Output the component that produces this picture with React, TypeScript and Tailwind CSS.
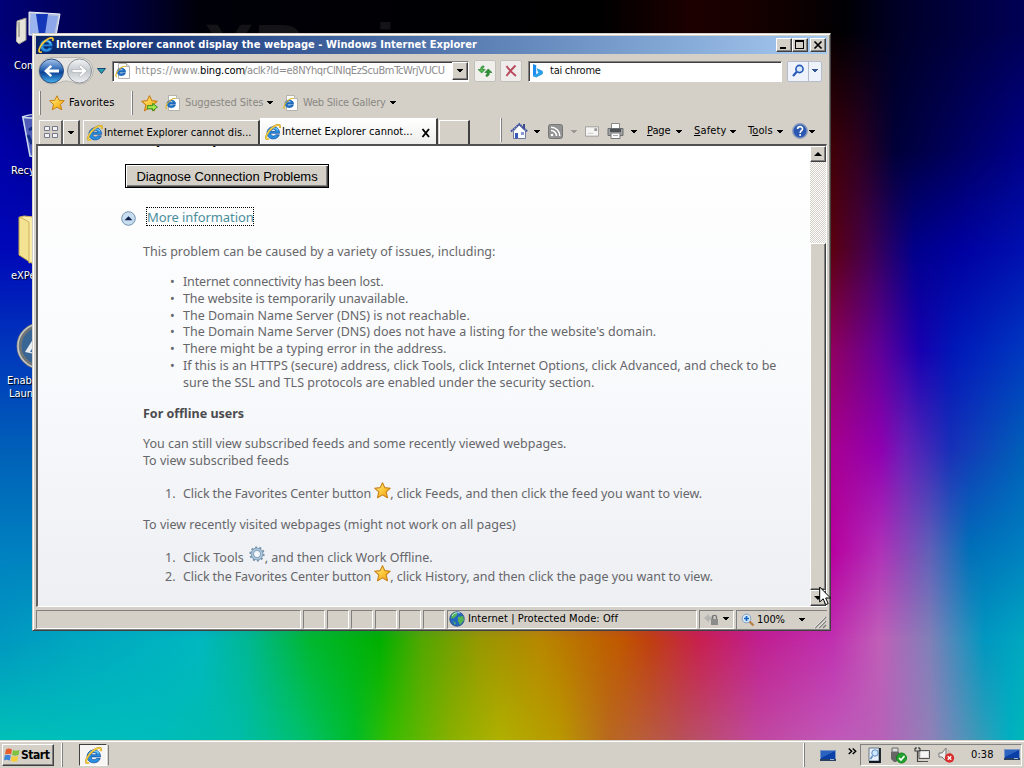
import type { ReactNode } from "react";

const UI = "font-['DejaVu_Sans_Condensed','DejaVu_Sans',sans-serif] [font-stretch:condensed]";

function Caret({ className = "text-black" }: { className?: string }) {
  return (
    <svg width="6" height="4" viewBox="0 0 6 4" className={`shrink-0 ${className}`} shapeRendering="crispEdges">
      <path d="M0 0h6L3 3.5z" fill="currentColor" />
    </svg>
  );
}

function IeLogo({ size = 16 }: { size?: number }) {
  return (
    <svg width={size} height={size} viewBox="0 0 16 16" className="shrink-0">
      <path
        d="M14.6 9.3H5.7c.1 1.7 1.2 2.7 2.7 2.7 1 0 1.8-.4 2.3-1.2h3.6c-.9 2.6-3.1 4.1-6 4.1C4.7 14.9 2 12.5 2 9c0-3.6 2.7-6.2 6.3-6.2 3.7 0 6.3 2.5 6.3 6.5zM5.8 7.3h5.1c-.2-1.3-1.2-2.1-2.5-2.1-1.4 0-2.3.8-2.6 2.1z"
        fill="#2a90e0"
        stroke="#0b4a9c"
        strokeWidth=".7"
      />
      <path d="M3.5 8c.7-2.600 2.500-4.200 4.900-4.300 2 0 3.600.9 4.500 2.400" fill="none" stroke="#7fd0f8" strokeWidth="1.1" />
      <path d="M3.800 15.100C.7 16 .4 13.500 2 10.300 4.200 5.800 9.600 1.100 13.300.8c1.800-.1 2 1.400 1.300 3" fill="none" stroke="#b98a10" strokeWidth="1.9" />
      <path d="M3.800 15.100C.7 16 .4 13.500 2 10.300 4.200 5.800 9.600 1.100 13.300.8c1.800-.1 2 1.400 1.300 3" fill="none" stroke="#f5d34a" strokeWidth="1.2" />
    </svg>
  );
}

function PageIcon() {
  return (
    <svg width="16" height="16" viewBox="0 0 16 16" className="shrink-0">
      <path d="M3.500.5h8l3 3v12h-11z" fill="#fff" stroke="#b5b3ab" />
      <path d="M11.500.5v3h3" fill="#e4e4e4" stroke="#b5b3ab" />
      <path d="M10.600 9.200H4.500c.1 1.700 2.700 2 3.500.8h2.400C9.600 13.900 2 13.600 2 8.800c0-5 8.900-5.100 8.600.4zM4.600 7.300h3.700C7.800 5.600 5.100 5.600 4.600 7.300z" fill="#1c6fc4" stroke="#155aa8" strokeWidth=".5" />
      <path d="M2 13.800C-.3 13.800.9 9.900 3.600 7 6 4.300 9.700 2.300 10.800 3.700" fill="none" stroke="#e0b52c" strokeWidth="1.100" />
    </svg>
  );
}

function Star({ size = 16, arrow = false }: { size?: number; arrow?: boolean }) {
  return (
    <svg width={size} height={size} viewBox="0 0 16 16" className="shrink-0">
      <defs>
        <linearGradient id="gold" x1="0" y1="0" x2="1" y2="1">
          <stop offset="0" stopColor="#fff6a0" />
          <stop offset=".5" stopColor="#fcc83a" />
          <stop offset="1" stopColor="#f09a10" />
        </linearGradient>
      </defs>
      <path d="M8 .8l2.200 4.500 5.100.5-3.800 3.600 1.200 5.400L8 12.100l-4.700 2.700 1.200-5.400L.7 5.800l5.100-.5z" fill="url(#gold)" stroke="#c87f14" strokeLinejoin="round" />
      {arrow && <path d="M6 10h5V7.900l4.500 3.500-4.500 3.600V13H6z" fill="#a4e84e" stroke="#2d8a1c" strokeWidth=".9" />}
    </svg>
  );
}

function Gear() {
  return (
    <svg width="16" height="16" viewBox="0 0 16 16" className="shrink-0">
      <circle cx="8" cy="8" r="6.600" fill="none" stroke="#7892a8" strokeWidth="2" strokeDasharray="2.100 2.050" />
      <circle cx="8" cy="8" r="4.600" fill="none" stroke="#7f9ab2" strokeWidth="3.400" />
      <circle cx="8" cy="8" r="4.600" fill="none" stroke="#a9c5dc" strokeWidth="1.800" />
      <circle cx="8" cy="8" r="2.700" fill="#f5f8fb" />
    </svg>
  );
}

function Monitor() {
  return (
    <svg width="16" height="14" viewBox="0 0 16 14" className="shrink-0">
      <path d="M0 1h16v11H0z" fill="#7895c4" />
      <path d="M1 2h14v8H1z" fill="#0a3fa8" />
      <path d="M1 2h14L1 9z" fill="#2c62c0" />
      <path d="M0 10h16v2H0z" fill="#29415f" />
      <path d="M10 10h4v1h-4z" fill="#9ab4d8" />
    </svg>
  );
}

const wallpaper = [
  "[background-image:linear-gradient(to_right,#000078_0,#00003c_130px,#000008_200px,#000_600px,#1c0000_690px,#180000_740px,#0c0000_800px,#000004_845px,#000028_900px,#000055_1024px)]",
  "[background-image:linear-gradient(to_right,#0000a8_0,#000098_40px,#400008_832px,#2c0020_860px,#000038_895px,#000088_1024px)] [mask-image:linear-gradient(transparent_30px,#000_150px)]",
  "[background-image:linear-gradient(to_right,#0008b8_0,#0008b8_40px,#5c0010_832px,#400050_870px,#00008c_915px,#0000a0_960px,#0010b0_1024px)] [mask-image:linear-gradient(transparent_150px,#000_250px)]",
  "[background-image:linear-gradient(to_right,#0038bc_0,#0038bc_40px,#900060_832px,#600098_880px,#1800b0_920px,#0018b8_955px,#0038c0_1024px)] [mask-image:linear-gradient(transparent_250px,#000_350px)]",
  "[background-image:linear-gradient(to_right,#0060b8_0,#0060b8_40px,#a80090_832px,#9000b0_880px,#6820b8_905px,#1830b8_950px,#0060b8_1024px)] [mask-image:linear-gradient(transparent_350px,#000_450px)]",
  "[background-image:linear-gradient(to_right,#0080c0_0,#0080c0_40px,#b800a0_832px,#b030b8_880px,#6060b8_930px,#0070b8_970px,#0080c0_1024px)] [mask-image:linear-gradient(transparent_450px,#000_550px)]",
  "[background-image:linear-gradient(to_right,#0098c0_0,#00a8c0_80px,#00b8c0_200px,#00b890_250px,#00b830_310px,#00b000_380px,#50a800_420px,#989800_480px,#b88800_540px,#c05800_620px,#c04010_650px,#c82050_700px,#c02090_760px,#c030b0_832px,#c060b8_880px,#8080b8_930px,#0098c0_985px,#00a8c0_1024px)] [mask-image:linear-gradient(transparent_550px,#000_640px)]",
  "[background-image:linear-gradient(to_right,#00c0b8_0,#00bcbc_150px,#00bca8_240px,#00c070_300px,#00bc28_355px,#38bc00_390px,#88b000_450px,#b0b000_500px,#b89800_560px,#b86820_610px,#b85058_680px,#c048a0_760px,#c058b8_832px,#b860b8_880px,#9080b8_930px,#4098b8_975px,#00b0c0_1010px,#00b8b8_1024px)] [mask-image:linear-gradient(transparent_640px,#000_740px)]",
];

function Desktop() {
  return (
    <>
      {wallpaper.map((w) => (
        <div key={w} className={`absolute inset-0 ${w}`} />
      ))}
      <div className="absolute left-[204px] top-[5px] text-[75px] leading-[90px] font-bold text-[#141416] font-['Liberation_Sans',sans-serif]">XPerience</div>

      <svg width="46" height="36" viewBox="0 0 46 36" className="absolute left-4 top-[10px]">
        <path d="M1 11l9-3v22l-7 4-3-3z" fill="#e7e5da" stroke="#9a988c" />
        <path d="M3 12v15" stroke="#77766c" />
        <path d="M13 2l31 2-4 22-27-1z" fill="#b8c4dc" stroke="#eef2fa" />
        <path d="M15 4l27 2-4 19-24-1z" fill="#8ea6ea" />
        <path d="M15 4h5l8 20H14z" fill="#9ab4f0" />
        <path d="M20 4h12l-3 20h-6z" fill="#1436b8" />
      </svg>
      <svg width="32" height="48" viewBox="0 0 32 48" className="absolute left-[20px] top-[112px]">
        <path d="M2 5l28-2-2 42-18-1z" fill="#8faad8" opacity=".55" />
        <path d="M2 5c8-3 20-4 28-2M2 5c8 2 20 1 28-2M3 6l7 38 18 2" fill="none" stroke="#c9d8ee" strokeWidth="1.500" />
        <path d="M9 18l5-3 3 5M8 23l4 9M15 33l5-2" fill="none" stroke="#102c80" strokeWidth="3" />
      </svg>
      <svg width="30" height="50" viewBox="0 0 30 50" className="absolute left-[18px] top-[215px]">
        <path d="M1 2l14 3v44L1 40z" fill="#f3e291" stroke="#c3a54c" />
        <path d="M6 1l20 2v40l-15 5V7L2 2z" fill="#f8edaa" stroke="#cfb25c" />
      </svg>
      <svg width="48" height="48" viewBox="0 0 48 48" className="absolute left-4 top-[322px]">
        <circle cx="24" cy="24" r="21" fill="#3a6696" stroke="#6f7476" strokeWidth="5" />
        <circle cx="24" cy="24" r="22" fill="none" stroke="#c6c8c4" strokeWidth="1.500" />
        <path d="M9 30L19 14l9 20z" fill="#e8edf2" />
        <path d="M14 30l5-8 4 9z" fill="#3a6696" />
      </svg>
      <div className={`${UI} text-[11px] leading-[13px] text-white [text-shadow:1px_1px_1px_#000]`}>
        <div className="absolute left-[14px] top-[59px] w-16 text-left">Computer</div>
        <div className="absolute left-[11px] top-[164px] w-20 text-left">Recycle Bin</div>
        <div className="absolute left-[11px] top-[269px] w-20 text-left">eXPerience</div>
        <div className="absolute left-[7px] top-[374px] w-20 text-left">Enable<br /><span className="pl-[2px]">Launch</span></div>
      </div>
    </>
  );
}

function CaptionButton({ children }: { children: ReactNode }) {
  return (
    <div className="flex h-[14px] w-4 items-center justify-center border border-t-white border-l-white border-r-[#404040] border-b-[#404040] bg-[#d4d0c8] shadow-[inset_-1px_-1px_0_#808080]">
      {children}
    </div>
  );
}

function TitleBar() {
  return (
    <div className="flex h-[18px] items-center bg-linear-to-r from-[#0a246a] to-[#a6caf0] pl-[2px] pr-px">
      <IeLogo size={16} />
      <span className="ml-[2px] flex-1 whitespace-nowrap text-[11px] font-bold tracking-[0.055px] text-white">Internet Explorer cannot display the webpage - Windows Internet Explorer</span>
      <CaptionButton>
        <svg width="12" height="10" shapeRendering="crispEdges"><path d="M2 7h6v2H2z" /></svg>
      </CaptionButton>
      <CaptionButton>
        <svg width="12" height="10" shapeRendering="crispEdges"><path d="M1 0h9v9H1zM2 2v6h7V2z" fillRule="evenodd" /></svg>
      </CaptionButton>
      <div className="ml-[2px]">
        <CaptionButton>
          <svg width="10" height="10"><path d="M1.500 1.500l7 7m0-7l-7 7" stroke="#000" strokeWidth="1.700" /></svg>
        </CaptionButton>
      </div>
    </div>
  );
}

function NavBar() {
  return (
    <div className="flex h-[34px] items-center">
      <svg width="58" height="30" viewBox="0 0 58 30" className="shrink-0">
        <defs>
          <linearGradient id="orb" x1="0" y1="0" x2="0" y2="1">
            <stop offset="0" stopColor="#a9c6ea" />
            <stop offset=".45" stopColor="#2964b4" />
            <stop offset=".55" stopColor="#0c3f94" />
            <stop offset="1" stopColor="#48b4ee" />
          </linearGradient>
          <linearGradient id="orb2" x1="0" y1="0" x2="0" y2="1">
            <stop offset="0" stopColor="#f4f5f6" />
            <stop offset=".5" stopColor="#c3c8cd" />
            <stop offset="1" stopColor="#eef0f2" />
          </linearGradient>
        </defs>
        <path d="M15 1.500h29a13 13 0 010 26.500c-6 0-9-3-14-3s-8 3-14 3a13 13 0 010-26.500z" fill="#e6e5e1" stroke="#b7b5ae" />
        <circle cx="15.500" cy="15" r="12" fill="url(#orb)" stroke="#304f80" />
        <circle cx="43.500" cy="15" r="12" fill="url(#orb2)" stroke="#8d9298" />
        <path d="M8 15l6.500-6 1.600 1.800-3 2.800H23v2.800h-9.900l3 2.800-1.600 1.800z" fill="#fff" />
        <path d="M51 15l-6.500-6-1.600 1.800 3 2.800H36v2.800h9.900l-3 2.800 1.600 1.800z" fill="#fff" stroke="#a7adb3" strokeWidth=".7" />
      </svg>
      <svg width="9" height="6" viewBox="0 0 9 6" className="ml-[3px] shrink-0"><path d="M.5.5h8l-4 5z" fill="#2d9db0" stroke="#174a70" /></svg>
      <div className="ml-[6px] flex h-[21px] w-[357px] shrink-0 items-center border border-t-[#808080] border-l-[#808080] border-r-white border-b-white bg-white pl-[2px] shadow-[inset_1px_1px_0_#404040]">
        <PageIcon />
        <span className="ml-[4px] flex w-[317px] whitespace-nowrap text-[11px] text-[#8c8c8c] mt-px">
          <span className="w-[65px] shrink-0 tracking-[0.3px]">https://www.</span>
          <span className="w-[44px] shrink-0 tracking-[-0.12px] text-black">bing.com</span>
          <span className="tracking-[-0.37px]">/aclk?ld=e8NYhqrClNIqEzScuBmTcWrjVUCU</span>
        </span>
        <div className="flex h-[18px] w-4 shrink-0 items-center justify-center border border-t-white border-l-white border-r-[#404040] border-b-[#404040] bg-[#d4d0c8] shadow-[inset_-1px_-1px_0_#808080]"><Caret /></div>
      </div>
      <div className="ml-[5px] flex h-[22px] w-[22px] shrink-0 items-center justify-center rounded-[2px] border border-[#c2c0ba] bg-[#f0efec]">
        <svg width="16" height="14" viewBox="0 0 16 14">
          <path d="M7 2C4.500 1.500 3.500 3.500 3.700 5.500H1L4.700 9l3.500-3.500H6C5.800 4 6 3.200 7 3.300z" fill="#4fb54c" stroke="#1f7526" strokeWidth=".6" />
          <path d="M9 12.300c2.500.5 3.500-1.500 3.300-3.800H15L11.300 5 7.800 8.500H10c.2 1.500 0 2.300-1 2.200z" fill="#318f34" stroke="#1f7526" strokeWidth=".6" />
        </svg>
      </div>
      <div className="ml-[4px] flex h-[22px] w-[22px] shrink-0 items-center justify-center rounded-[2px] border border-[#c2c0ba] bg-[#efedeb]">
        <svg width="14" height="14" viewBox="0 0 14 14"><path d="M2.500 2c2 3 5 6.500 9.500 10M11.500 1.500c-3 3-6 6-9 10.500" fill="none" stroke="#b8485c" strokeWidth="1.900" /></svg>
      </div>
      <div className="ml-[6px] flex h-[21px] w-[254px] shrink-0 items-center border border-t-[#808080] border-l-[#808080] border-r-white border-b-white bg-white pl-[3px] shadow-[inset_1px_1px_0_#404040]">
        <svg width="12" height="16" viewBox="0 0 12 16">
          <path d="M1 1l3.200 1.200v9.300L1 13.500z" fill="#1b8df0" />
          <path d="M4.800 5.200L10 7.600a2.500 2.500 0 010 4L4.200 14.500 1 13.300l5.400-3.500-1-2z" fill="#2a9fe8" />
        </svg>
        <span className="ml-[6px] mt-px text-[11px] tracking-[-0.25px] text-[#111]">tai chrome</span>
      </div>
      <div className="ml-[5px] flex h-[21px] w-[35px] shrink-0 rounded-[2px] border border-[#b5bdcc] bg-[#eef2fb]">
        <div className="flex w-[21px] items-center justify-center border-r border-[#b5bdcc]">
          <svg width="14" height="14" viewBox="0 0 14 14"><circle cx="8.500" cy="5" r="3.600" fill="#d9eafc" stroke="#2659b8" strokeWidth="1.600" /><path d="M5.800 7.800L2 12" stroke="#2659b8" strokeWidth="2.200" /></svg>
        </div>
        <div className="flex flex-1 items-center justify-center"><Caret className="text-[#34568f]" /></div>
      </div>
    </div>
  );
}

function Grip({ className = "" }: { className?: string }) {
  return <div className={`h-6 w-[2px] shrink-0 border-l border-white border-r border-r-[#808080] ${className}`} />;
}

function FavoritesBar() {
  return (
    <div className="flex h-[30px] items-center text-[11px]">
      <Grip className="ml-[3px]" />
      <div className="ml-[8px] flex w-[82px] items-center">
        <Star size={16} />
        <span className="ml-[4px] tracking-[0.1px] text-black">Favorites</span>
      </div>
      <Grip className="" />
      <div className="ml-[8px]"><Star size={17} arrow /></div>
      <div className="ml-[7px] flex w-[118px] items-center text-[#8a8883]">
        <PageIcon />
        <span className="ml-[4px] w-[80px] whitespace-nowrap tracking-[-0.1px] mt-px">Suggested Sites</span>
        <Caret className="ml-[2px] text-black" />
      </div>
      <div className="flex items-center text-[#8a8883]">
        <PageIcon />
        <span className="ml-[4px] w-[84px] whitespace-nowrap tracking-[-0.22px] mt-px">Web Slice Gallery</span>
        <Caret className="ml-[3px] text-black" />
      </div>
    </div>
  );
}

function TabBar() {
  return (
    <div className="flex h-[26px] shrink-0 items-end text-[11px]">
      <div className="ml-[3px] flex h-[24px] w-[24px] items-center justify-center border-t border-l border-white border-r-2 border-r-[#606060]">
        <svg width="16" height="15" viewBox="0 0 16 15"><path d="M1.500 1.500h5v4h-5zM9.500 1.500h5v4h-5zM1.500 8.500h5v4h-5zM9.500 8.500h5v4h-5z" fill="#f3f3f3" stroke="#75788a" /></svg>
      </div>
      <div className="flex h-[24px] w-[17px] items-center justify-center border-t border-l border-white border-r-2 border-r-[#505050]"><Caret /></div>
      <div className="ml-[3px] flex h-[24px] w-[177px] items-center border-t border-l border-white border-r-2 border-r-[#404040] pl-[3px]">
        <IeLogo size={16} />
        <span className="ml-[1px] whitespace-nowrap tracking-[0px] mt-px">Internet Explorer cannot dis...</span>
      </div>
      <div className="flex h-[26px] w-[178px] items-center border-t border-l border-white border-r-2 border-r-[#404040] bg-linear-to-b from-white to-[#eeeeec] pl-[4px]">
        <IeLogo size={16} />
        <span className="ml-[1px] w-[139px] whitespace-nowrap tracking-[0.02px] mt-px">Internet Explorer cannot...</span>
        <svg width="10" height="10" viewBox="0 0 10 10" className="mt-[2px]"><path d="M1.500 1l6.500 8M8 1L1.500 9" stroke="#000" strokeWidth="1.900" /></svg>
      </div>
      <div className="ml-[1px] h-[24px] w-[31px] border-t border-l border-white border-r-2 border-r-[#404040]" />
      <div className="ml-[30px] flex h-[26px] items-center">
        <Grip className="mt-[-2px]" />
        <svg width="18" height="18" viewBox="0 0 18 18" className="ml-[8px]">
          <path d="M13 2h2v5h-2z" fill="#3d4c88" />
          <path d="M3.500 9v7.500h12V9L9 3z" fill="#fafbff" stroke="#707a9c" />
          <path d="M1 9.500L9.300 2l8 7.500" fill="none" stroke="#3a4fa0" strokeWidth="1.800" strokeDasharray="2 .5" />
          <path d="M5 11h3v5.500H5z" fill="#3a58b8" /><path d="M11 10h3v3h-3z" fill="#8899d4" />
        </svg>
        <Caret className="ml-[6px] mt-[2px]" />
        <svg width="15" height="15" viewBox="0 0 15 15" className="ml-[8px]">
          <rect x=".5" y=".5" width="14" height="14" rx="2" fill="#939393" stroke="#777" />
          <circle cx="4" cy="11" r="1.300" fill="#fff" /><path d="M3 6.500c3 0 5.500 2.500 5.500 5.500M3 3.200c5 0 8.800 4 8.800 8.800" fill="none" stroke="#fff" strokeWidth="1.500" />
        </svg>
        <Caret className="ml-[8px] mt-[2px] text-[#9b9993]" />
        <svg width="14" height="11" viewBox="0 0 15 11" className="ml-[8px]"><path d="M.5.5h14v10H.5z" fill="#f5f5f4" stroke="#9b9b9b" /><path d="M10 2h3v3h-3z" fill="#999" /><path d="M3 7.500h6" stroke="#ccc" /></svg>
        <svg width="17" height="16" viewBox="0 0 17 16" className="ml-[8px]">
          <path d="M4.500.5h8V6h-8z" fill="#fff" stroke="#888" />
          <path d="M1 5.500h15v7H1z" fill="#a0a2a4" stroke="#6b6e71" /><path d="M3 6h11v3H3z" fill="#4e5153" />
          <path d="M4 10h9v5.500H4z" fill="#f8f8f8" stroke="#777" /><path d="M6 12.500h5" stroke="#aaa" />
        </svg>
        <Caret className="ml-[7px] mt-[2px]" />
        <span className="ml-[10px] w-[26px] tracking-[-0.1px]"><u>P</u>age</span><Caret className="ml-[3px] mt-[2px]" />
        <span className="ml-[12px] w-[34px] tracking-[0.15px]"><u>S</u>afety</span><Caret className="ml-[2px] mt-[2px]" />
        <span className="ml-[12px] w-[27px] tracking-[0.1px]">T<u>o</u>ols</span><Caret className="ml-[2px] mt-[2px]" />
        <svg width="16" height="16" viewBox="0 0 16 16" className="ml-[9px]">
          <circle cx="8" cy="8" r="7.200" fill="#2c58b4" stroke="#8699bb" strokeWidth="1.400" />
          <path d="M5.600 6.100c0-3.300 5-3.200 4.900-.2 0 1.800-2.300 1.800-2.300 4" fill="none" stroke="#fff" strokeWidth="1.600" /><circle cx="8.100" cy="12" r="1" fill="#fff" />
        </svg>
        <Caret className="ml-[1px] mt-[2px]" />
      </div>
    </div>
  );
}

const causes = [
  "Internet connectivity has been lost.",
  "The website is temporarily unavailable.",
  "The Domain Name Server (DNS) is not reachable.",
  "The Domain Name Server (DNS) does not have a listing for the website's domain.",
  "There might be a typing error in the address.",
  "If this is an HTTPS (secure) address, click Tools, click Internet Options, click Advanced, and check to be",
];

function Step({ n, children, className = "" }: { n: number; children: ReactNode; className?: string }) {
  return (
    <div className={`flex h-[17px] items-center whitespace-nowrap ${className}`}>
      <span className="ml-[22px] w-[18px]">{n}.</span>
      {children}
    </div>
  );
}

function ErrorPage() {
  return (
    <div className="min-w-0 flex-1 overflow-hidden bg-linear-to-b from-white via-[#f9fafc] to-[#edeff3] pl-[105px] font-['Noto_Sans','Open_Sans',sans-serif] text-[12.5px] leading-[17px] text-[#66666a]">
      <div className="-ml-[19px] h-[3px] overflow-hidden"><div className="mt-[-15px] text-[12px] text-black">What you can try:</div></div>
      <div className="mt-[15px] -ml-[18px] flex h-6 w-[204px] items-center justify-center border border-black bg-[#d4d0c8] font-['Liberation_Sans',sans-serif] text-[13px] tracking-[-0.06px] text-black shadow-[inset_1px_1px_0_#fff,inset_-1px_-1px_0_#404040,inset_-2px_-2px_0_#808080]">Diagnose Connection Problems</div>
      <div className="mt-[19px] -ml-[22px] flex h-[19px] items-center">
        <svg width="15" height="15" viewBox="0 0 15 15" className="mt-[3px]"><circle cx="7.500" cy="7.500" r="6.800" fill="#c7def0" stroke="#7390ac" /><path d="M3.500 9.200h8l-4-4z" fill="#10204a" /></svg>
        <div className="ml-[10px] flex h-[19px] w-[108px] items-center border border-dotted border-black pt-[2px] text-[13px] tracking-[-0.08px] whitespace-nowrap text-[#4a8e9c]">More information</div>
      </div>
      <p className="mt-[17px]">This problem can be caused by a variety of issues, including:</p>
      <ul className="mt-[14px] leading-[16.800px]">
        {causes.map((c, i) => (
          <li key={c} className="flex whitespace-nowrap"><span className="ml-[27px] w-[13px]">•</span><span className={i === 0 ? "tracking-[-0.16px]" : i === 1 ? "tracking-[-0.08px]" : ""}>{c}</span></li>
        ))}
        <li className="pl-10">sure the SSL and TLS protocols are enabled under the security section.</li>
      </ul>
      <p className="mt-[13px] font-bold text-[#4b4b4e]">For offline users</p>
      <p className="mt-[13px]">You can still view subscribed feeds and some recently viewed webpages.</p>
      <p>To view subscribed feeds</p>
      <Step n={1} className="mt-4"><span className="tracking-[-0.11px]">Click the Favorites Center button</span><span className="mb-[5px] ml-[3px]"><Star size={17} /></span><span className="ml-[-1px] tracking-[-0.03px]">, click Feeds, and then click the feed you want to view.</span></Step>
      <p className="mt-[14px]">To view recently visited webpages (might not work on all pages)</p>
      <Step n={1} className="mt-4">Click Tools<span className="mb-[6px] ml-[5px]"><Gear /></span>, and then click Work Offline.</Step>
      <Step n={2} className="mt-[2px]"><span className="tracking-[-0.11px]">Click the Favorites Center button</span><span className="mb-[5px] ml-[3px]"><Star size={17} /></span><span className="ml-[-1px] tracking-[-0.03px]">, click History, and then click the page you want to view.</span></Step>
    </div>
  );
}

function ScrollBar() {
  const raised = "flex h-4 w-4 items-center justify-center border border-t-white border-l-white border-r-[#404040] border-b-[#404040] bg-[#d4d0c8] shadow-[inset_-1px_-1px_0_#808080]";
  return (
    <div className="flex w-4 shrink-0 flex-col bg-[#e8e6e1] bg-[conic-gradient(#d4d0c8_25%,#fff_0_50%,#d4d0c8_0_75%,#fff_0)] bg-size-[2px_2px]">
      <div className={raised}><svg width="8" height="4"><path d="M0 4h8L4 0z" /></svg></div>
      <div className="h-[81px]" />
      <div className="flex-1 border border-t-white border-l-white border-r-[#404040] border-b-[#404040] bg-[#d4d0c8] shadow-[inset_-1px_-1px_0_#808080]" />
      <div className={raised}><svg width="8" height="4"><path d="M0 0h8L4 4z" /></svg></div>
    </div>
  );
}

const pane = "flex h-[19px] shrink-0 items-center border border-t-[#808080] border-l-[#808080] border-r-white border-b-white";

function StatusBar() {
  return (
    <div className="mt-[2px] flex h-[20px] items-center gap-[2px] text-[11px]">
      <div className={`${pane} w-[265px]`} />
      {[0, 1, 2, 3, 4, 5].map((i) => (
        <div key={i} className={`${pane} w-[22px]`} />
      ))}
      <div className={`${pane} w-[250px] pl-[1px]`}>
        <svg width="16" height="16" viewBox="0 0 16 16"><circle cx="8" cy="8" r="7.300" fill="#2468bd" stroke="#2c487c" strokeWidth=".7" /><path d="M3 3c3-3 6-2 5 1L5 7l-3 .500zM9 6l5-1 1 4-4 5-2-4zM4 10l3 2-1 2z" fill="#58b555" /><path d="M3 5c2-3 5-4 8-3" fill="none" stroke="#bce7ff" /></svg>
        <span className="ml-[3px] mt-px whitespace-nowrap tracking-[0.08px]">Internet | Protected Mode: Off</span>
      </div>
      <div className={`${pane} w-[35px] pl-[3px]`}>
        <svg width="17" height="16" viewBox="0 0 17 16"><path d="M1 7l5-4v2.500h5V9H6v2.500z" fill="#b6b5b2" /><path d="M8 8h7v6H8z" fill="#8b8b89" /><path d="M9.500 8V6c0-2.300 4-2.300 4 0v2" fill="none" stroke="#777" strokeWidth="1.300" /></svg>
        <Caret className="ml-[3px]" />
      </div>
      <div className="flex h-[19px] flex-1 items-center border-t border-l border-[#808080] pl-[4px]">
        <svg width="14" height="14" viewBox="0 0 14 14"><path d="M8 8l4.500 4.500" stroke="#bb8046" strokeWidth="2.400" /><circle cx="5.500" cy="5.500" r="4.300" fill="#d9ecfc" stroke="#82a0c4" /><path d="M5.500 3v5M3 5.500h5" stroke="#1764bd" strokeWidth="1.700" /></svg>
        <span className="ml-[2px] mt-px w-[30px] tracking-[-0.1px]">100%</span>
        <Caret className="ml-[12px]" />
        <svg width="13" height="13" viewBox="0 0 13 13" className="ml-auto self-end"><path d="M1 12L12 1M5 12l7-7M9 12l3-3" stroke="#808080" strokeWidth="1.500" /><path d="M0 12L11 1M4 12l7-7" stroke="#fff" strokeWidth=".7" /></svg>
      </div>
    </div>
  );
}

function Taskbar() {
  return (
    <div className={`${UI} absolute inset-x-0 bottom-0 flex h-7 items-center border-t border-[#d4d0c8] bg-[#d4d0c8] text-[11px] shadow-[inset_0_1px_0_#fff]`}>
      <div className="ml-[2px] mt-[1px] flex h-[22px] w-[52px] items-center border border-t-white border-l-white border-r-[#404040] border-b-[#404040] pl-[1px] shadow-[inset_-1px_-1px_0_#808080]">
        <svg width="16" height="16" viewBox="0 0 16 16">
          <path d="M2 2.500C4 1 6 1.500 8 2.600L7 7.500C5 6.300 3 6.400 1 7.500z" fill="#e85c2c" />
          <path d="M9 3c2 1 4 1 6.500 0l-1 5C12 9 10 9 8 8z" fill="#7fc241" />
          <path d="M.8 8.500c2-1 4-1 6 .2l-1 5C4 12.500 2 12.500 0 13.500z" fill="#3b86d8" />
          <path d="M7.800 9c2 1 4 1 6.500 0l-1 5c-2.500 1-4.500 1-6.500 0z" fill="#f8cb38" />
        </svg>
        <span className="ml-[1px] text-[12px] font-bold tracking-[-0.45px]">Start</span>
      </div>
      <Grip className="ml-[7px] mt-[1px] h-5" />
      <div className="ml-[16px] mt-[1px] flex h-[22px] w-[28px] items-center justify-center border border-t-[#404040] border-l-[#404040] border-r-white border-b-white bg-[#f7f6f4]"><IeLogo size={17} /></div>
      <div className="ml-[1px] mt-[1px] h-[20px] w-px bg-[#808080]" />
      <div className="flex-1" />
      <Grip className="mt-[1px] h-5" />
      <div className="ml-[15px] mt-[2px]"><Monitor /></div>
      <svg width="9" height="7" viewBox="0 0 9 7" className="ml-[12px] mb-[6px]"><path d="M.7.5l3 2.800-3 2.700M4.700.5l3 2.800-3 2.700" fill="none" stroke="#000" strokeWidth="1.400" /></svg>
      <div className="mt-[1px] ml-[3px] mr-[2px] flex h-[22px] w-[162px] items-center border border-t-[#808080] border-l-[#808080] border-r-white border-b-white pl-[6px]">
        <svg width="16" height="16" viewBox="0 0 16 16"><path d="M2 1h10v13H2z" fill="#e8f1fb" stroke="#697889" /><path d="M13 1v14H2" fill="none" stroke="#101820" strokeWidth="1.800" /><circle cx="8" cy="6" r="3.200" fill="#cce7ff" stroke="#5c8abc" /><path d="M5.500 9L3.500 12" stroke="#5c8abc" strokeWidth="1.600" /></svg>
        <svg width="17" height="17" viewBox="0 0 17 17" className="ml-[7px]"><path d="M2 1h6v4H2z" fill="#ddd" stroke="#666" /><path d="M1 5h8v7l-3 3H4l-3-3z" fill="#666" /><circle cx="11.500" cy="11" r="5" fill="#20a22c" stroke="#16801f" /><path d="M9 11l2 2 3.500-4" fill="none" stroke="#fff" strokeWidth="1.700" /></svg>
        <svg width="17" height="16" viewBox="0 0 17 16" className="ml-[7px]"><path d="M5 3.500h10.500v8H5zM7 14.500h7" fill="#ddd" stroke="#555" /><path d="M1 1v3h5V1M3.500 4v10.500H7M2 0v2M5 0v2" fill="none" stroke="#444" strokeWidth="1.200" /><path d="M7 5h7v5H7z" fill="#f6f6f6" /></svg>
        <svg width="17" height="16" viewBox="0 0 17 16" className="ml-[7px]"><path d="M1 6h3l4-5v13L4 10H1z" fill="#eee" stroke="#777" /><path d="M10 3c2 2 2 3 2 5" fill="none" stroke="#aaa" /><circle cx="11.500" cy="11" r="4.700" fill="#da2c2c" /><path d="M9.700 9.200l3.600 3.600m0-3.600l-3.600 3.600" stroke="#fff" strokeWidth="1.300" /></svg>
        <span className="ml-[16px] w-[25px] tracking-[0.1px]">0:38</span>
        <div className="ml-[8px]"><Monitor /></div>
      </div>
    </div>
  );
}

export default function App() {
  return (
    <div className="relative h-[768px] w-[1024px] overflow-hidden bg-black">
      <Desktop />
      <div className={`${UI} absolute left-[32px] top-[33px] flex h-[598px] w-[799px] flex-col border border-[#d4d0c8] border-r-[#404040] border-b-[#404040] bg-[#d4d0c8] px-[3px] pt-[2px] shadow-[inset_1px_1px_0_#fff,inset_-1px_-1px_0_#808080]`}>
        <TitleBar />
        <NavBar />
        <FavoritesBar />
        <TabBar />
        <div className="flex h-[463px] shrink-0 border-t-2 border-l-2 border-t-[#505050] border-l-[#606060] border-r border-b border-r-white border-b-white">
          <ErrorPage />
          <ScrollBar />
        </div>
        <StatusBar />
      </div>
      <svg width="13" height="20" viewBox="0 0 13 20" className="absolute left-[819px] top-[586px]">
        <path d="M.7 1v15l3.500-3.200 2.500 5.900 2.500-1.100-2.500-5.600h4.800z" fill="#fff" stroke="#000" />
      </svg>
      <Taskbar />
    </div>
  );
}
